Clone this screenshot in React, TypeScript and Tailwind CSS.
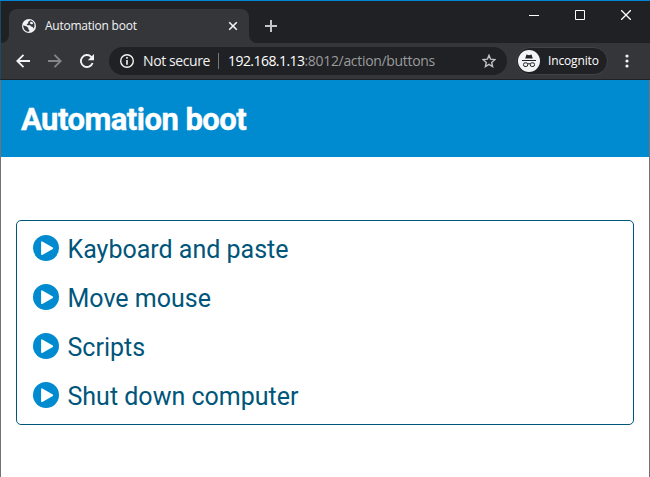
import React from 'react';

const actions = ['Kayboard and paste', 'Move mouse', 'Scripts', 'Shut down computer'];

function Globe() {
  return (
    <svg className="h-[14px] w-[14px] shrink-0" viewBox="0 0 14 14">
      <circle cx="7" cy="7" r="7" fill="#f1f3f4" />
      <path d="M1.2 6.2 3.2 7.1 4.8 7.4 6.3 8.9 6.3 10.2 7.6 11.4 6.7 12.7C3.6 12.7 1.2 10 1.2 6.2ZM8.2 1.3 6.1 3.1 6.3 4.3 4.6 5.2 5.3 6.2 8 6.2 9.2 7.6 10.8 7.9 11.4 9.8C13.8 6.6 12.3 2 8.2 1.3Z" fill="#35363a" />
      <path d="m8.3 2.7 2 .2.9 2-1.8.3-1.4-.7Z" fill="#f1f3f4" />
    </svg>
  );
}

function TabStrip() {
  return (
    <div className="flex h-[42px] border-l border-[#164c66] bg-[#202124]">
      <div className="flex w-[8px] items-end">
        <svg className="h-[8px] w-[8px]" viewBox="0 0 8 8"><path d="M8 0v8H0a8 8 0 0 0 8-8Z" fill="#35363a" /></svg>
      </div>
      <div className="mt-[8px] flex h-[34px] w-[240px] items-center rounded-t-[8px] bg-[#35363a] pl-[13px]">
        <Globe />
        <span className="ml-[9px] w-[183px] whitespace-nowrap font-['Open_Sans',sans-serif] text-[12px] leading-[16px] tracking-[-0.24px] text-[#f1f3f4]">Automation boot</span>
        <svg className="h-[10px] w-[10px] shrink-0" viewBox="0 0 10 10" stroke="#f1f3f4" strokeWidth="1.6"><path d="m1.2 1.2 7.6 7.6M8.8 1.2 1.2 8.8" /></svg>
      </div>
      <div className="flex w-[8px] items-end">
        <svg className="h-[8px] w-[8px]" viewBox="0 0 8 8"><path d="M0 0v8h8a8 8 0 0 1-8-8Z" fill="#35363a" /></svg>
      </div>
      <svg className="ml-[8px] mt-[19px] h-[12px] w-[12px]" viewBox="0 0 12 12" stroke="#c4c5c6" strokeWidth="2"><path d="M6 0v12M0 6h12" /></svg>
      <div className="ml-auto mr-[19px] mt-[9px] flex h-[10px] gap-[36px]">
        <svg className="h-[10px] w-[10px]" viewBox="0 0 10 10"><path d="M0 5.5h10" stroke="#fff" /></svg>
        <svg className="h-[10px] w-[10px]" viewBox="0 0 10 10"><path d="M.5.5h9v9h-9Z" fill="none" stroke="#fff" /></svg>
        <svg className="h-[10px] w-[10px]" viewBox="0 0 10 10"><path d="m0 0 10 10M10 0 0 10" stroke="#fff" strokeWidth="1.3" /></svg>
      </div>
    </div>
  );
}

function Incognito() {
  return (
    <svg className="h-[22px] w-[22px] shrink-0" viewBox="0 0 22 22">
      <circle cx="11" cy="11" r="11" fill="#f1f3f4" />
      <path d="M7.2 8.6 8.5 4.5 11 5.2 13.5 4.5 14.8 8.6Z" fill="#202124" />
      <path d="M4 10.5h14" stroke="#202124" />
      <g fill="none" stroke="#202124" strokeWidth="1">
        <rect x="5.5" y="12.8" width="4.2" height="3.7" rx="1.6" />
        <rect x="12.3" y="12.8" width="4.2" height="3.7" rx="1.6" />
        <path d="M9.7 14q1.3-.7 2.6 0" />
      </g>
    </svg>
  );
}

function Toolbar() {
  return (
    <div className="flex h-[37px] items-center border-b border-l border-b-[#202124] border-l-[#164c66] bg-[#35363a] pl-[15px] font-['Open_Sans',sans-serif]">
      <svg className="h-[14px] w-[14px]" viewBox="0 0 14 14" fill="none" stroke="#f1f3f4" strokeWidth="1.8"><path d="M14 7H1.3M7.5.8 1.3 7l6.2 6.2" /></svg>
      <svg className="ml-[18px] h-[14px] w-[14px]" viewBox="0 0 14 14" fill="none" stroke="#858689" strokeWidth="1.8"><path d="M0 7h12.7M6.5.8 12.7 7l-6.2 6.2" /></svg>
      <svg className="ml-[18px] h-[14px] w-[14px]" viewBox="0 0 14 14"><path d="M12.6 9A6 6 0 1 1 11.2 2.8L12.3 3.9" fill="none" stroke="#f1f3f4" strokeWidth="1.9" /><path d="M14 0v6.2H7.8Z" fill="#f1f3f4" /></svg>
      <div className="ml-[15px] flex h-[28px] w-[398px] items-center rounded-full bg-[#202124] pl-[11px] text-[14px] leading-[20px]">
        <svg className="h-[14px] w-[14px] shrink-0" viewBox="0 0 14 14"><circle cx="7" cy="7" r="6.3" fill="none" stroke="#f1f3f4" strokeWidth="1.4" /><path d="M7 3.1v1.6M7 6v4.8" stroke="#f1f3f4" strokeWidth="1.6" /></svg>
        <span className="ml-[9px] w-[75px] shrink-0 whitespace-nowrap tracking-[-0.4px] text-[#f1f3f4]">Not secure</span>
        <span className="h-[16px] w-px bg-[#77787b]" />
        <span className="ml-[9px] w-[254px] shrink-0 whitespace-nowrap tracking-[-0.32px] text-[#9a9b9d]"><span className="tracking-[-0.55px] text-white">192.168.1.13</span>:8012/action/buttons</span>
        <svg className="h-[14px] w-[14px] shrink-0" viewBox="0 0 14 14"><path d="m7 1.3 1.6 3.9 4.3.4-3.2 2.8.9 4.2L7 10.4l-3.6 2.2.9-4.2-3.2-2.8 4.3-.4Z" fill="none" stroke="#c0c1c3" strokeWidth="1.4" /></svg>
      </div>
      <div className="ml-[9px] flex h-[28px] w-[92px] items-center rounded-full border border-[#414246] bg-[#202124] pl-[1px]">
        <Incognito />
        <span className="ml-[8px] whitespace-nowrap text-[12px] leading-[16px] tracking-[-0.15px] text-white">Incognito</span>
      </div>
      <svg className="ml-[17px] h-[14px] w-[4px]" viewBox="0 0 4 14" fill="#f1f3f4"><circle cx="2" cy="2" r="1.6" /><circle cx="2" cy="7" r="1.6" /><circle cx="2" cy="12" r="1.6" /></svg>
    </div>
  );
}

export default function App() {
  return (
    <div className="flex h-[477px] w-[650px] flex-col overflow-hidden border-t border-[#0086d4] bg-white">
      <TabStrip />
      <Toolbar />
      <div className="flex flex-1 flex-col border-x border-[#737373]">
        <header className="flex h-[77px] items-center bg-[#008ad0] pl-[20px]">
          <h1 className="whitespace-nowrap pt-[2px] font-[Roboto,sans-serif] text-[31px] font-bold leading-[40px] tracking-[-0.54px] text-white [-webkit-text-stroke:0.4px_white]">Automation boot</h1>
        </header>
        <main className="mx-[15px] mt-[63px] h-[205px] rounded-[5px] border border-[#00557a] pl-[16px] pt-[3px]">
          {actions.map((a) => (
            <div key={a} className="flex h-[49px] items-center">
              <svg className="-mt-px h-[26px] w-[26px]" viewBox="0 0 26 26"><circle cx="13" cy="13" r="13" fill="#008ad0" /><path d="M8.9 7.2v12L19.4 13.2Z" fill="#fff" stroke="#fff" strokeWidth="1.6" strokeLinejoin="round" /></svg>
              <span className="ml-[8.5px] whitespace-nowrap pt-[2px] font-[Roboto,sans-serif] text-[25px] leading-[32px] text-[#00557a]">{a}</span>
            </div>
          ))}
        </main>
      </div>
    </div>
  );
}
